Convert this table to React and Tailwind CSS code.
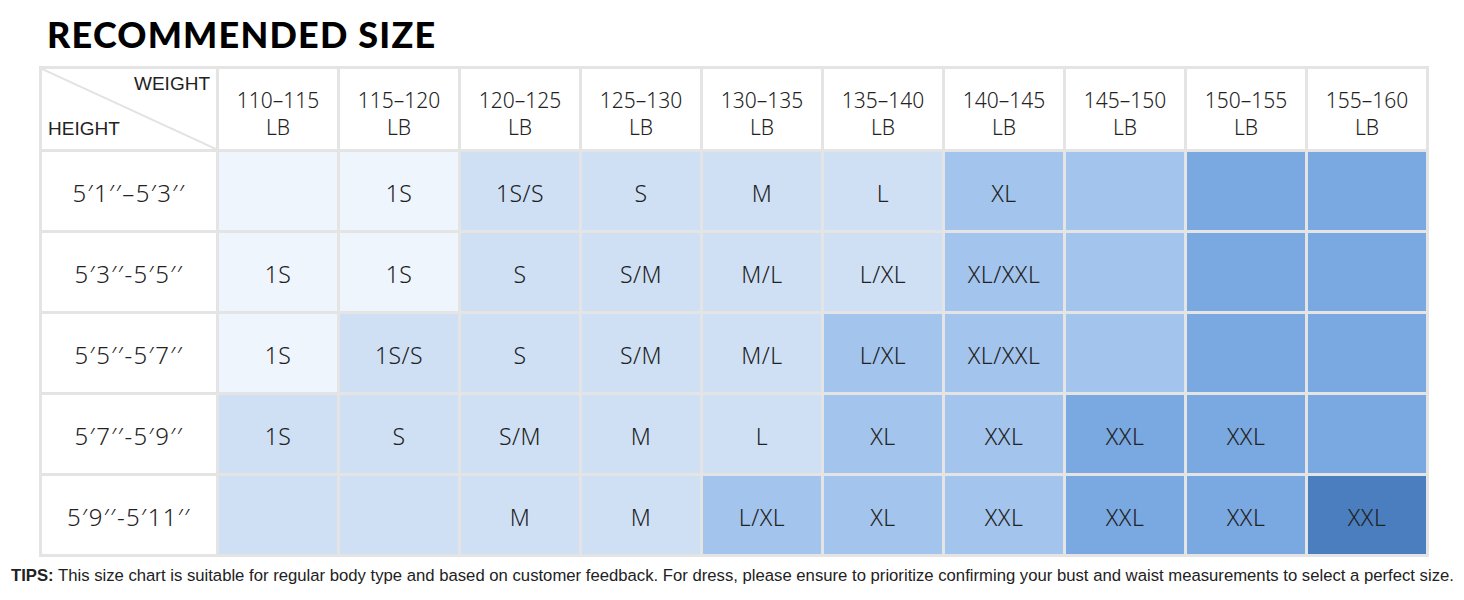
const weights = [
  "110–115",
  "115–120",
  "120–125",
  "125–130",
  "130–135",
  "135–140",
  "140–145",
  "145–150",
  "150–155",
  "155–160",
];

// tone: 0 lightest .. 4 darkest
const tones = {
  0: "bg-[#eef5fd]",
  1: "bg-[#cfe0f5]",
  2: "bg-[#a3c4ec]",
  3: "bg-[#7aa8e1]",
  4: "bg-[#4a7ebf]",
};

const rows = [
  {
    label: "5′1′′–5′3′′",
    cells: [
      [0, ""], [0, "1S"], [1, "1S/S"], [1, "S"], [1, "M"],
      [1, "L"], [2, "XL"], [2, ""], [3, ""], [3, ""],
    ],
  },
  {
    label: "5′3′′-5′5′′",
    cells: [
      [0, "1S"], [0, "1S"], [1, "S"], [1, "S/M"], [1, "M/L"],
      [1, "L/XL"], [2, "XL/XXL"], [2, ""], [3, ""], [3, ""],
    ],
  },
  {
    label: "5′5′′-5′7′′",
    cells: [
      [0, "1S"], [1, "1S/S"], [1, "S"], [1, "S/M"], [1, "M/L"],
      [2, "L/XL"], [2, "XL/XXL"], [2, ""], [3, ""], [3, ""],
    ],
  },
  {
    label: "5′7′′-5′9′′",
    cells: [
      [1, "1S"], [1, "S"], [1, "S/M"], [1, "M"], [1, "L"],
      [2, "XL"], [2, "XXL"], [3, "XXL"], [3, "XXL"], [3, ""],
    ],
  },
  {
    label: "5′9′′-5′11′′",
    cells: [
      [1, ""], [1, ""], [1, "M"], [1, "M"], [2, "L/XL"],
      [2, "XL"], [2, "XXL"], [3, "XXL"], [3, "XXL"], [4, "XXL"],
    ],
  },
];

export default function App() {
  return (
    <div className="w-[1464px] h-[600px] bg-white font-['Liberation_Sans',Arial,sans-serif] text-[#222]">
      {/* title */}
      <div className="h-[66px] pl-[47px] pt-[14px]">
        <h1 className="font-['Lato',sans-serif] font-black text-[36px] leading-[40px] tracking-[1.2px] text-black">
          RECOMMENDED SIZE
        </h1>
      </div>

      {/* chart */}
      <div className="ml-[39px] w-[1390px] grid grid-cols-[174px_repeat(10,118px)] grid-rows-[80px_repeat(5,78px)] gap-[3px] p-[3px] bg-[#e4e4e4] font-['Noto_Sans',sans-serif] font-light">
        <div className="relative bg-white overflow-hidden font-['Liberation_Sans',Arial,sans-serif] font-normal">
          <svg className="absolute inset-0" width="174" height="80" viewBox="0 0 174 80">
            <line x1="0" y1="0" x2="174" y2="80" stroke="#e2e2e2" strokeWidth="2" />
          </svg>
          <span className="absolute right-[6px] top-[5px] text-[19px] leading-none">WEIGHT</span>
          <span className="absolute left-[6px] top-[50px] text-[19px] leading-none">HEIGHT</span>
        </div>
        {weights.map((w) => (
          <div key={w} className="bg-white flex flex-col items-center justify-center pt-[10px] text-[21px] leading-[27px]">
            <span>{w}</span>
            <span>LB</span>
          </div>
        ))}

        {rows.map((r) => (
          <>
            <div key={r.label} className="bg-white flex items-center justify-center pt-[4px] text-[24px] tracking-[1.3px]">
              {r.label}
            </div>
            {r.cells.map(([t, txt], i) => (
              <div
                key={r.label + i}
                className={`${tones[t]} flex items-center justify-center pt-[4px] text-[23px] tracking-[0.5px]`}
              >
                {txt}
              </div>
            ))}
          </>
        ))}
      </div>

      {/* tips */}
      <p className="mt-[9px] pl-[11px] text-[16.7px] leading-[20px] text-[#222] whitespace-nowrap">
        <span className="font-bold">TIPS:</span> This size chart is suitable for regular body type and based on customer feedback. For dress, please ensure to prioritize confirming your bust and waist measurements to select a perfect size.
      </p>
    </div>
  );
}
